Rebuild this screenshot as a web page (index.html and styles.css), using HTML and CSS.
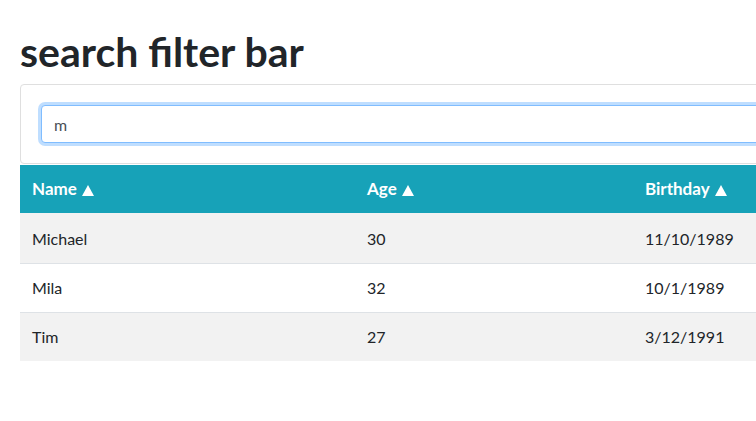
FILE: index.html
```html
<!DOCTYPE html>
<html lang="en">
<head>
<meta charset="utf-8">
<title>search filter bar</title>
<link rel="stylesheet" href="styles.css">
</head>
<body>
<div class="page">
  <h1 class="title">search filter bar</h1>
  <div class="card">
    <input class="search" type="text" value="m">
  </div>
  <table class="grid">
    <colgroup>
      <col class="col-name">
      <col class="col-age">
      <col class="col-bday">
    </colgroup>
    <thead>
      <tr>
        <th>Name<span class="sort"></span></th>
        <th>Age<span class="sort"></span></th>
        <th>Birthday<span class="sort"></span></th>
      </tr>
    </thead>
    <tbody>
      <tr class="odd first"><td>Michael</td><td>30</td><td>11/10/1989</td></tr>
      <tr><td>Mila</td><td>32</td><td>10/1/1989</td></tr>
      <tr class="odd"><td>Tim</td><td>27</td><td>3/12/1991</td></tr>
    </tbody>
  </table>
</div>
</body>
</html>
```

FILE: styles.css
```css
html, body {
  margin: 0;
  padding: 0;
  background: #ffffff;
}
body {
  font-family: Lato, "Open Sans", "Liberation Sans", sans-serif;
  font-size: 16px;
  line-height: 1.5;
  color: #212529;
  overflow: hidden;
}
.page {
  width: 1100px;
  padding: 28px 20px 0 20px;
}
.title {
  margin: 0 0 8px 0;
  font-size: 41px;
  font-weight: 700;
  line-height: 48px;
  color: #212529;
}
.card {
  border: 1px solid #dfdfdf;
  border-radius: 4px;
  padding: 20px;
}
.search {
  display: block;
  box-sizing: border-box;
  width: 100%;
  height: 38px;
  padding: 6px 12px;
  font-family: inherit;
  font-size: 16px;
  line-height: 24px;
  color: #495057;
  background: #fff;
  border: 1px solid #80bdff;
  border-radius: 4px;
  box-shadow: 0 0 0 3px rgba(0, 123, 255, 0.25);
  outline: none;
}
.grid {
  width: 100%;
  border-collapse: collapse;
  margin-top: 1px;
}
.col-name { width: 335px; }
.col-age { width: 278px; }
.grid th {
  background: #17a2b8;
  color: #ffffff;
  font-size: 17px;
  font-weight: 700;
  text-align: left;
  padding: 12px;
  line-height: 24px;
}
.sort {
  display: inline-block;
  width: 0;
  height: 0;
  margin-left: 5px;
  border-left: 6.5px solid transparent;
  border-right: 6.5px solid transparent;
  border-bottom: 11px solid #ffffff;
  vertical-align: -1px;
}
.grid td {
  padding: 12px;
  line-height: 24px;
  border-top: 1px solid #dee2e6;
}
.grid tr.first td {
  border-top: none;
  padding-top: 14px;
}
.grid tr.odd td {
  background: #f2f2f2;
}
```
